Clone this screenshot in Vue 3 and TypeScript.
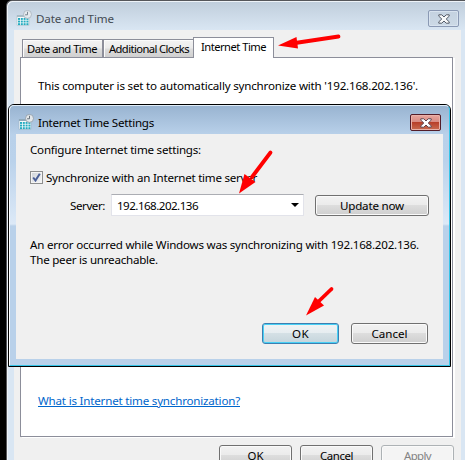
<script setup lang="ts">
import type { Directive } from 'vue'

// Spreads a label's letters so that it fills a given width in pixels.
const vFit: Directive<HTMLElement, number> = {
  mounted(el, binding) {
    const count = (el.textContent ?? '').length
    const natural = el.getBoundingClientRect().width
    el.style.letterSpacing = `${(binding.value - natural) / count}px`
  },
}

const tabs = [
  { label: 'Date and Time', width: 70, cls: 'first' },
  { label: 'Additional Clocks', width: 80, cls: 'second' },
  { label: 'Internet Time', width: 65, cls: 'selected' },
]
const calendarCells = [0, 1, 2, 3].flatMap((c) => [0, 1, 2].map((r) => ({ x: 2 + c * 2.8, y: 8 + r * 2.6 })))
</script>

<template>
  <main class="desktop">
    <section class="window">
      <header class="titlebar">
        <svg class="icon" width="16" height="16" viewBox="0 0 16 16">
          <path d="M1 5.500h12v9.800H1z" fill="#f5fbfc" stroke="#b4c4cc" stroke-width=".7" />
          <path d="M1 5h11v2H1z" fill="#a9bcc6" />
          <rect v-for="(c, i) in calendarCells" :key="i" :x="c.x" :y="c.y" width="2" height="1.9" fill="#25abc0" />
          <circle cx="11.500" cy="4.400" r="4" fill="#e4eaee" stroke="#a8b3bc" stroke-width=".8" />
          <path d="M11.500 1.800v3h-2.400" fill="none" stroke="#77838d" />
        </svg>
        <h1><span v-fit="78">Date and Time</span></h1>
        <button class="close pale" aria-label="Close">
          <svg width="12" height="10" viewBox="0 0 12 10"><path d="M.8.8h3L6 3 8.200.8h3v1.400L8.200 5l3 2.800v1.400h-3L6 7 3.800 9.200h-3V7.800l3-2.800-3-2.800z" fill="#f7f8f9" stroke="#555c69" stroke-width="1" /></svg>
        </button>
      </header>
      <div class="client">
        <nav class="tabs">
          <div v-for="t in tabs" :key="t.label" class="tab" :class="t.cls"><span v-fit="t.width">{{ t.label }}</span></div>
        </nav>
        <div class="pane">
          <p class="status"><span v-fit="380">This computer is set to automatically synchronize with '192.168.202.136'.</span></p>
          <a class="link"><span v-fit="202">What is Internet time synchronization?</span></a>
        </div>
        <footer class="actions">
          <button class="btn"><span v-fit="16">OK</span></button>
          <button class="btn"><span v-fit="33">Cancel</span></button>
          <button class="btn disabled"><span v-fit="27">Apply</span></button>
        </footer>
      </div>
    </section>

    <section class="dialog">
      <div class="frame">
        <header class="dialog-title">
          <svg class="icon" width="16" height="16" viewBox="0 0 16 16">
            <path d="M1 5.500h12v9.800H1z" fill="#f5fbfc" stroke="#9fb5c5" stroke-width=".7" />
            <path d="M1 5h11v2H1z" fill="#8fa9ba" />
            <rect v-for="(c, i) in calendarCells" :key="i" :x="c.x" :y="c.y" width="2" height="1.9" fill="#25abc0" />
            <circle cx="11.500" cy="4.400" r="4" fill="#e4e8eb" stroke="#8e9ba6" stroke-width=".8" />
            <path d="M11.500 1.800v3h-2.400" fill="none" stroke="#66727c" />
          </svg>
          <h2><span v-fit="116">Internet Time Settings</span></h2>
          <button class="close red" aria-label="Close">
            <svg width="12" height="10" viewBox="0 0 12 10"><path d="M.8.8h3L6 3 8.200.8h3v1.400L8.200 5l3 2.800v1.400h-3L6 7 3.800 9.200h-3V7.800l3-2.800-3-2.800z" fill="#fff" stroke="#5e4650" stroke-width="1" /></svg>
          </button>
        </header>
        <div class="dialog-client">
          <p class="intro"><span v-fit="171">Configure Internet time settings:</span></p>
          <label class="sync">
            <span class="check">
              <svg width="9" height="9" viewBox="0 0 9 9"><path d="M1.200 4.500 3.500 7.500 7.800.8" fill="none" stroke="#4a5f97" stroke-width="2" /></svg>
            </span>
            <span v-fit="211">Synchronize with an Internet time server</span>
          </label>
          <div class="server">
            <div class="server-label"><span v-fit="35">Server:</span></div>
            <div class="combo">
              <span v-fit="81">192.168.202.136</span>
              <svg width="8" height="4" viewBox="0 0 8 4"><path d="M0 0h8L4 4z" fill="#000" /></svg>
            </div>
            <button class="btn update"><span v-fit="64">Update now</span></button>
          </div>
          <p class="error">
            <span v-fit="389">An error occurred while Windows was synchronizing with 192.168.202.136.</span><br />
            <span v-fit="128">The peer is unreachable.</span>
          </p>
          <div class="dialog-actions">
            <button class="btn default"><span v-fit="17">OK</span></button>
            <button class="btn"><span v-fit="36">Cancel</span></button>
          </div>
        </div>
      </div>
    </section>

    <svg class="arrows" width="465" height="460" viewBox="0 0 465 460">
      <g fill="#f00" stroke="#f00" stroke-linecap="round">
        <path d="M338.500 36.500 295 43" stroke-width="3.800" />
        <path d="M278 45.500 296.500 37 298 48.500z" stroke="none" />
        <path d="M270.500 152.500 252 177" stroke-width="3.800" />
        <path d="M239 193.500 244.500 174 255.500 182z" stroke="none" />
        <path d="M331.500 289 318 302" stroke-width="3.800" />
        <path d="M306 315.500 315 297 324 305.500z" stroke="none" />
      </g>
    </svg>
  </main>
</template>

<style>
body { margin: 0; background: #000; overflow: hidden; }
</style>

<style scoped>
* { box-sizing: border-box; }
.desktop { position: relative; width: 465px; height: 460px; overflow: hidden; background: #000; font: 11.6px/15px "Noto Sans", sans-serif; color: #000; padding: 0 0 0 6px; }
h1, h2, p { margin: 0; font: inherit; white-space: nowrap; }
span { white-space: nowrap; }
button { font: inherit; color: inherit; padding: 0; margin: 0; }
.window { height: 480px; width: 459px; border: 1px solid #55565a; border-right: 0; border-radius: 6px 0 0 0; background: linear-gradient(#bfcddb, #d9e6f3 29px, #d9e6f3); box-shadow: inset 1px 1px #eef3f8; padding: 0 4px 0 7px; }
.titlebar { height: 29px; display: flex; align-items: flex-start; padding: 9px 2px 0 2px; }
.icon { flex: none; }
.titlebar h1 { margin: 1px auto 0 4px; color: #444b53; }
.close { flex: none; width: 31px; height: 17px; border-radius: 2px; display: flex; align-items: center; justify-content: center; }
.pale { border: 1px solid #8a99b4; background: linear-gradient(#c4d2e0, #ccd9e6); box-shadow: inset 0 0 0 1px #d8e3ef; }
.red { border: 1px solid #531d29; background: linear-gradient(#e8a69f, #d78a80 48%, #b8402a 50%, #c96d51); box-shadow: inset 0 0 0 1px #e9b2a9; }
.client { background: #f0f0f0; height: 440px; padding: 7px 6px 0; }
.tabs { display: flex; align-items: flex-end; height: 21px; padding-left: 2px; position: relative; margin-bottom: -1px; font-size: 11.2px; }
.tab { height: 19px; border: 1px solid #8c8e9a; background: linear-gradient(#f3f3f3, #ebebeb 48%, #dddddd 52%, #d0d0d0); padding-top: 1px; box-shadow: inset 1px 1px #fbfbfb; }
.first { width: 81px; padding-left: 4px; }
.second { width: 90px; border-right: 0; padding-left: 5px; }
.selected { width: 81px; height: 21px; background: #fff; border-bottom: 0; padding-left: 7px; box-shadow: none; }
.pane { width: 433px; height: 380px; border: 1px solid #8c8e9a; background: #fff; box-shadow: 2px 1px #fff; padding: 20px 0 0 17px; display: flex; flex-direction: column; }
.link { margin-top: 300px; align-self: flex-start; color: #0066cc; text-decoration: underline; text-underline-offset: 1px; }
.actions { display: flex; gap: 8px; justify-content: flex-end; padding: 8px 1px 0 0; font-size: 11.4px; }
.btn { width: 73px; height: 21px; border: 1px solid #707070; border-radius: 3px; background: linear-gradient(#f2f2f2, #ebebeb 48%, #dddddd 50%, #cfcfcf); box-shadow: inset 0 0 0 1px #fafafa; display: flex; align-items: center; justify-content: center; flex: none; }
.disabled { border-color: #adb2b5; background: #f4f4f4; color: #838383; }
.dialog { position: absolute; left: 8px; top: 104px; width: 443px; height: 263px; border: 1px solid #000; border-radius: 6px 6px 0 0; background: #b9d1ea; }
.frame { height: 261px; border: 1px solid #35c5e8; border-top-color: #e0edf8; border-left-color: #fff; border-radius: 5px 5px 0 0; padding: 0 6px; background: linear-gradient(#99b4d1, #b9d1ea 29px, #bad2eb 55px, #dce9f7 118px, #b9d1ea 120px); }
.dialog-title { height: 28px; display: flex; align-items: flex-start; padding: 8px 2px 0; }
.dialog-title h2 { margin: 1px auto 0 4px; }
.dialog-client { height: 225px; background: #f0f0f0; padding: 8px 14px 0; }
.sync { display: flex; align-items: center; margin-top: 13px; height: 15px; gap: 3px; }
.check { width: 13px; height: 13px; flex: none; border: 1px solid #8e8f8f; background: linear-gradient(135deg, #cdd2d8, #f7f7f7); box-shadow: inset 0 0 0 1px #f4f4f4; padding: 1px; display: flex; }
.server { display: flex; margin-top: 9px; height: 22px; }
.server-label { width: 81px; padding: 4px 0 0 40px; }
.combo { width: 193px; height: 22px; background: #fff; border: 1px solid #e2e3ea; border-top-color: #abadb3; padding: 0 4px 0 5px; display: flex; align-items: center; justify-content: space-between; }
.update { width: 114px; margin: 1px 0 0 11px; }
.error { margin-top: 21px; }
.dialog-actions { display: flex; justify-content: flex-end; gap: 12px; margin-top: 56px; padding-right: 1px; }
.dialog-actions .btn { width: 77px; }
.dialog-actions .default { border-color: #3c7fb1; box-shadow: inset 0 0 0 1px #48d0f5; background: linear-gradient(#f0f3f4, #e6edf0 48%, #d4e0e5 50%, #c5d5dc); }
.arrows { position: absolute; inset: 0; pointer-events: none; }
</style>
